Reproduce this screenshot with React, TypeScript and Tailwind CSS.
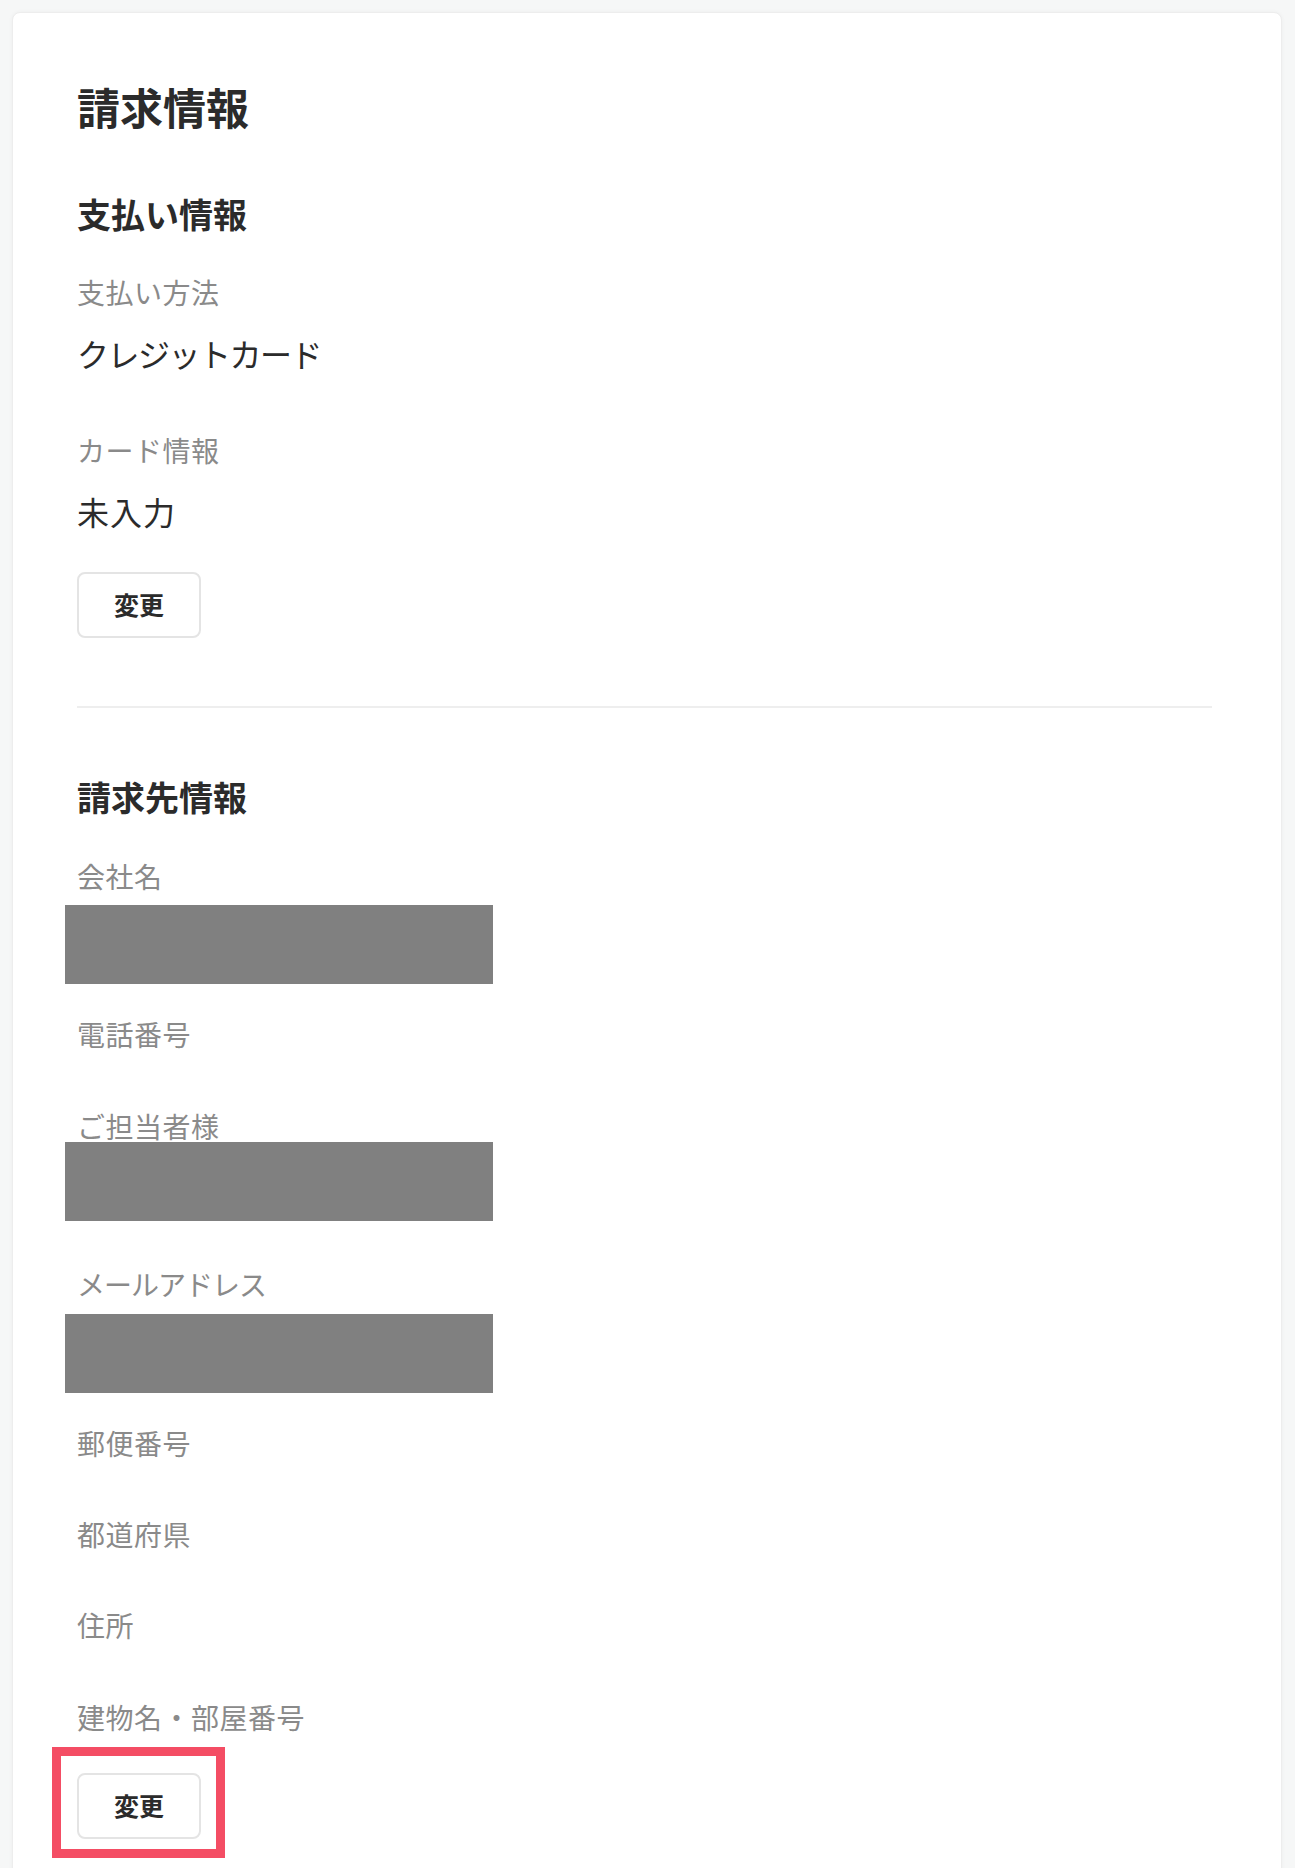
import React from "react";

const font = { fontFamily: '"Noto Sans CJK JP", "Noto Sans", sans-serif' };

type FieldProps = {
  label: string;
  value?: string;
  valueClass?: string;
  labelClass?: string;
  redact?: string;
};

function Field({ label, value, valueClass = "", labelClass = "tracking-[0.5px]", redact }: FieldProps) {
  return (
    <div>
      <div className={`h-[63px] text-[28px] leading-[66px] text-[#8a8a8a] ${labelClass}`}>{label}</div>
      {(value !== undefined || redact) && (
        <div className={`relative h-[67px] text-[32px] leading-[62px] text-[#2b2b2b] ${valueClass}`}>
          {value}
          {redact && <div className={`absolute left-[-12px] w-[428px] bg-[#808080] ${redact}`} />}
        </div>
      )}
    </div>
  );
}

function ChangeButton() {
  return (
    <button className="h-[66px] w-[124px] rounded-[8px] border-2 border-[#e4e4e4] bg-white text-[25px] font-bold text-[#2b2b2b]">
      変更
    </button>
  );
}

export default function App() {
  return (
    <div className="min-h-screen bg-[#f6f7f7] pl-[12px] pr-[13px] pt-[12px]" style={font}>
      <div className="rounded-[8px] border border-[#ededed] bg-white pl-[64px] pr-[69px] pt-[65px] pb-[80px] shadow-[0_0_4px_rgba(0,0,0,0.04)]">
        <h1 className="text-[43px] font-bold leading-[56px] text-[#2b2b2b]">請求情報</h1>

        {/* 支払い情報 */}
        <section className="mt-[56px]">
          <h2 className="text-[34px] font-bold leading-[48px] text-[#2b2b2b]">支払い情報</h2>
          <div className="mt-[21px] flex flex-col gap-[28px]">
            <Field label="支払い方法" value="クレジットカード" valueClass="tracking-[-1.5px]" />
            <Field label="カード情報" value="未入力" valueClass="tracking-[1px]" />
          </div>
          <div className="mt-[25px]">
            <ChangeButton />
          </div>
        </section>

        <hr className="mt-[68px] border-t-2 border-[#eeeeee]" />

        {/* 請求先情報 */}
        <section className="mt-[65px]">
          <h2 className="text-[34px] font-bold leading-[48px] text-[#2b2b2b]">請求先情報</h2>
          <div className="mt-[22px] flex flex-col gap-[28.4px]">
            <Field label="会社名" redact="top-[-1px] h-[79px]" />
            <Field label="電話番号" />
            <Field label="ご担当者様" redact="top-[-14px] h-[79px]" />
            <Field label="メールアドレス" labelClass="tracking-[-1px]" redact="top-[0px] h-[79px]" />
            <Field label="郵便番号" />
            <Field label="都道府県" />
            <Field label="住所" />
            <Field label="建物名・部屋番号" />
          </div>
          <div className="mt-[26px]">
            <div className="relative inline-block">
              <ChangeButton />
              <div className="pointer-events-none absolute left-[-25px] right-[-24px] top-[-26px] bottom-[-19px] border-[9px] border-[#f44d64]" />
            </div>
          </div>
        </section>
      </div>
    </div>
  );
}
